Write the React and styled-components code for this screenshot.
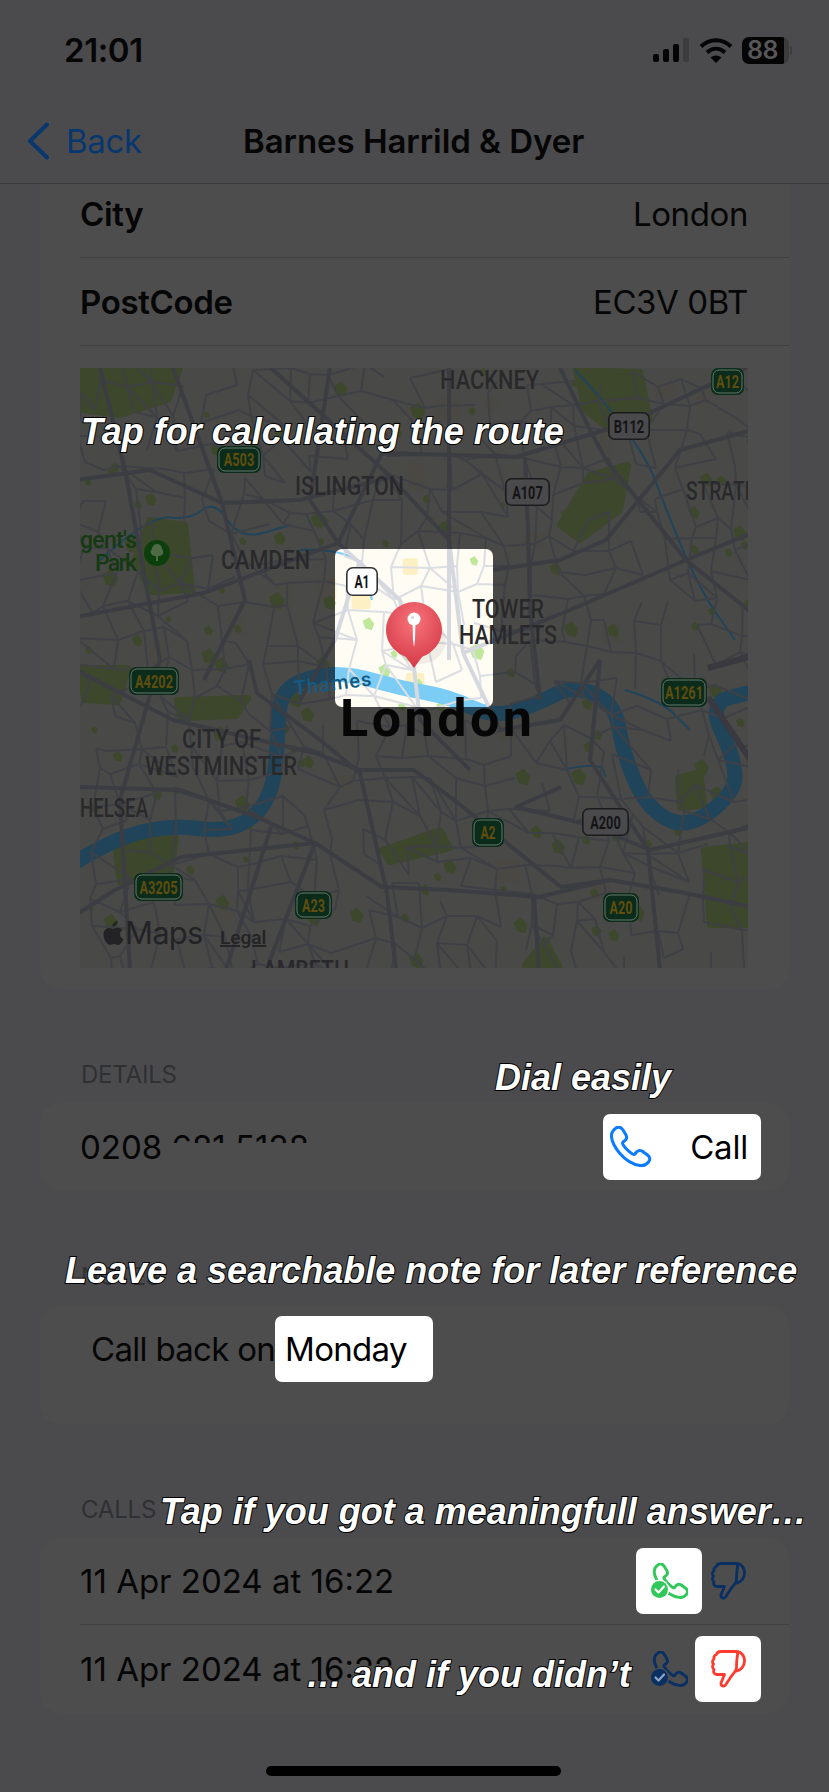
import React, { useMemo } from "react";
import styled, { createGlobalStyle } from "styled-components";

const GlobalStyle = createGlobalStyle`
  html, body {
    margin: 0;
    padding: 0;
    background: #4b4b4d;
  }
`;

const Screen = styled.div`
  position: relative;
  width: 829px;
  height: 1792px;
  overflow: hidden;
  display: flex;
  flex-direction: column;
  background: #4b4b4d;
  color: #060606;
  font-family: Inter, "Liberation Sans", sans-serif;
  font-size: 33px;
`;

const StatusBar = styled.div`
  height: 100px;
  flex: none;
  display: flex;
  justify-content: space-between;
  align-items: center;
  padding: 0 40px 0 64px;
  box-sizing: border-box;
`;

const Clock = styled.span`
  font-size: 33px;
  font-weight: 600;
  letter-spacing: -0.4px;
`;

const StatusIcons = styled.div`
  display: flex;
  align-items: center;
  gap: 9px;
`;

const Battery = styled.div`
  position: relative;
  width: 47px;
  height: 27px;
  border-radius: 7px;
  background: linear-gradient(90deg, #050505 0 89%, #3c3c3d 89% 100%);
  color: #57575a;
  font-size: 25px;
  font-weight: 600;
  display: flex;
  align-items: center;
  padding-left: 5px;
  box-sizing: border-box;
  letter-spacing: -0.5px;

  &::after {
    content: "";
    position: absolute;
    right: -3px;
    top: 9px;
    width: 2px;
    height: 9px;
    border-radius: 0 2px 2px 0;
    background: #3c3c3d;
  }
`;

const NavBar = styled.div`
  height: 84px;
  flex: none;
  display: flex;
  align-items: center;
  box-sizing: border-box;
  border-bottom: 1px solid #3a3a3b;
  padding-left: 26px;
  padding-bottom: 2px;
`;

const BackLink = styled.div`
  display: flex;
  align-items: center;
  gap: 16px;
  width: 217px;
  color: #07376e;
  letter-spacing: -0.3px;
`;

const NavTitle = styled.div`
  font-weight: 600;
  letter-spacing: -0.05px;
`;

const Scroller = styled.div`
  flex: 1;
  overflow: hidden;
  padding: 0 40px;
`;

const Card = styled.div`
  background: #4d4d4d;
  border-radius: 20px;
  padding-left: ${(p) => p.$inset || 40}px;
  padding-bottom: ${(p) => p.$bottom || 0}px;
`;

const FirstCard = styled(Card)`
  margin-top: -14px;
  border-radius: 0 0 20px 20px;
`;

const Row = styled.div`
  height: 88px;
  box-sizing: border-box;
  display: flex;
  align-items: center;
  justify-content: space-between;
  padding-right: ${(p) => p.$right || 41}px;
  border-bottom: ${(p) => (p.$divider ? "1px solid #3f3f40" : "none")};
`;

const FieldName = styled.span`
  font-weight: 600;
  letter-spacing: -0.35px;
`;

const FieldValue = styled.span`
  letter-spacing: -0.4px;
`;

const MapFrame = styled.div`
  width: 668px;
  height: 600px;
  margin-top: 22px;
  overflow: hidden;

  svg {
    display: block;
  }
`;

const SectionLabel = styled.div`
  height: 30px;
  line-height: 30px;
  margin: 71px 0 ${(p) => p.$after || 13}px 41px;
  color: #2f3032;
  font-size: 24px;
  letter-spacing: -0.2px;
`;

const CoveredText = styled.span`
  display: inline-block;
  clip-path: inset(0 0 ${(p) => p.$cut}% 0);
`;

const BodyText = styled.span`
  letter-spacing: ${(p) => p.$track || 0}px;
  white-space: pre;
`;

const SpotButton = styled.div`
  width: 158px;
  height: 66px;
  box-sizing: border-box;
  background: #fff;
  border-radius: 7px;
  display: flex;
  align-items: center;
  justify-content: space-between;
  padding: 0 13px 0 7px;
  color: #000;
  letter-spacing: -0.2px;
`;

const NoteField = styled(SpotButton)`
  justify-content: flex-start;
  padding: 0 0 0 10px;
  letter-spacing: -0.7px;
`;

const NoteRow = styled.div`
  height: 88px;
  display: flex;
  align-items: center;
`;

const Actions = styled.div`
  display: flex;
  align-items: center;
`;

const ActionSlot = styled.div`
  width: 66px;
  height: 66px;
  border-radius: 7px;
  background: ${(p) => (p.$lit ? "#fff" : "transparent")};
  display: flex;
  align-items: center;
  justify-content: center;

  & + & {
    margin-left: -7px;
  }
`;

const Caption = styled.div`
  position: absolute;
  left: ${(p) => p.$left}px;
  top: ${(p) => p.$top}px;
  font-family: "Liberation Sans", Arial, sans-serif;
  font-style: italic;
  font-weight: 700;
  font-size: 36px;
  line-height: 40px;
  white-space: nowrap;
  color: #fff;
  -webkit-text-stroke: 2px #000;
  paint-order: stroke fill;
`;

const HomeBar = styled.div`
  position: absolute;
  left: 266px;
  bottom: 16px;
  width: 295px;
  height: 10px;
  border-radius: 5px;
  background: #000;
`;

const PHONE =
  "M6 2C9 0 11 1 13 4L16 9C17 11 17 13 15 14.5L13 16C12.5 16.5 12.5 17.5 13 18.5C15 22 18 25 22.5 28C23.5 28.5 24.5 28.5 25 28L26.5 26C28 24.5 30 24 32 25L37.5 29C40 31 40.5 33.5 38.5 36C36.5 38.5 33.5 40 30 39.5C22 38.5 15 33.5 9.5 27C5 21.5 2 16 1.5 11C1.2 7.5 3 4 6 2Z";

const CallIcon = () => (
  <svg width="42" height="42" viewBox="0 0 42 42" fill="none">
    <path d={PHONE} stroke="#0a7cff" strokeWidth="3" strokeLinejoin="round" />
  </svg>
);

const LoggedCallIcon = ({ color, ring }) => (
  <svg width="38" height="36" viewBox="0 0 38 36" fill="none">
    <g transform="translate(3 0) scale(0.87)">
      <path d={PHONE} stroke={color} strokeWidth="3.4" strokeLinejoin="round" />
    </g>
    <circle cx="9.5" cy="26.5" r="10" fill={ring} />
    <circle cx="9.5" cy="26.5" r="8.5" fill={color} />
    <path
      d="M5.5 26.5l3 3 5.5-6"
      stroke={ring === "#fff" ? "#fff" : "#8fa6c4"}
      strokeWidth="2.2"
      strokeLinecap="round"
      strokeLinejoin="round"
    />
  </svg>
);

const ThumbDown = ({ color }) => (
  <svg width="35" height="38" viewBox="0 0 35 38" fill="none">
    <path
      d="M10 1.5H24C26 1.5 27 3 26.5 5C25.5 10 25.5 15 25.5 18C25.5 21 20.5 25 18.5 29L14.5 35C13 37 9.5 36 10 33L13.5 24.5H6C3 24.5 2 22 3 19.5C1 18 1.2 15.5 2.5 14C1 12.5 1.2 10 3 9C2.5 6.5 4 5 5.5 4.5C6 2.5 8 1.5 10 1.5Z"
      stroke={color}
      strokeWidth="2.8"
      strokeLinejoin="round"
    />
    <path
      d="M24 1.5C30 1 33.5 5.5 33.5 11C33.5 16 30 20.5 25.5 21"
      stroke={color}
      strokeWidth="2.8"
      strokeLinecap="round"
    />
  </svg>
);

const DIM = {
  land: "#494947",
  road: "#3c3d43",
  roadEdge: "#3f4045",
  park: "#3d472c",
  water: "#20445a",
  tint: "#4a4843",
};

const BRIGHT = {
  land: "#fefcf3",
  road: "#d6d8e0",
  roadEdge: "#dcdee4",
  park: "#bfe89c",
  water: "#7ccdf6",
  tint: "#fdf0c4",
};

const line = (pts) => "M" + pts.map((p) => p.join(" ")).join("L");

// rounds a polyline through the midpoints of its segments
const smooth = (pts) => {
  let d = `M${pts[0][0]} ${pts[0][1]}`;
  for (let i = 1; i < pts.length - 1; i++) {
    const mx = (pts[i][0] + pts[i + 1][0]) / 2;
    const my = (pts[i][1] + pts[i + 1][1]) / 2;
    d += `Q${pts[i][0]} ${pts[i][1]} ${mx} ${my}`;
  }
  const last = pts[pts.length - 1];
  return d + `L${last[0]} ${last[1]}`;
};

const THAMES = [
  [76, 862], [115, 838], [173, 825], [222, 832], [257, 817], [275, 783], [278, 727], [281, 693],
  [307, 677], [347, 673], [400, 688], [450, 697], [494, 718], [539, 703], [574, 685], [615, 703],
  [623, 753], [646, 807], [686, 830], [735, 793], [735, 760], [708, 703], [752, 692],
];

const CANALS = [
  [[100, 560], [150, 515], [190, 520], [215, 500], [240, 540], [290, 525]],
  [[575, 370], [640, 440], [670, 520], [700, 590], [735, 640]],
  [[561, 770], [600, 762], [606, 777]],
  [[625, 690], [660, 700], [690, 730]],
  [[300, 550], [360, 548], [372, 600]],
];

const MAIN_ROADS = [
  [[360, 770], [414, 770], [458, 803], [507, 843], [561, 887], [610, 880], [680, 892], [752, 907]],
  [[76, 915], [115, 890], [181, 857], [315, 843], [382, 887], [449, 890], [539, 897], [610, 880]],
  [[752, 827], [650, 850], [590, 825], [516, 807], [561, 787]],
  [[76, 617], [204, 593], [338, 543], [382, 453], [516, 457], [628, 423], [752, 365]],
  [[449, 360], [449, 540], [449, 660]],
  [[525, 457], [528, 530], [530, 610], [540, 700]],
  [[173, 368], [222, 503], [245, 600], [204, 680]],
  [[271, 368], [391, 477], [449, 540], [463, 653]],
  [[606, 460], [686, 560], [752, 613]],
  [[463, 653], [570, 610], [686, 560], [752, 533]],
  [[76, 670], [173, 720], [315, 753], [360, 770]],
  [[249, 660], [257, 693], [320, 740], [360, 773], [387, 893], [396, 970]],
  [[76, 787], [180, 790], [257, 817], [315, 843]],
  [[271, 827], [226, 970]],
  [[315, 843], [266, 970]],
  [[534, 897], [539, 970]],
  [[338, 543], [400, 600], [414, 668], [420, 720], [470, 770]],
  [[360, 560], [335, 640], [300, 700]],
  [[76, 480], [150, 470], [222, 503], [300, 500], [391, 477]],
  [[493, 570], [560, 560], [606, 540], [680, 450], [752, 430]],
  [[100, 368], [125, 470], [160, 660], [120, 800], [130, 970]],
  [[330, 368], [310, 500], [338, 543]],
  [[560, 368], [590, 430], [606, 460]],
  [[600, 660], [590, 760], [648, 850], [660, 970]],
  [[463, 653], [500, 730], [560, 720], [600, 660]],
];

const PARKS = [
  [[80, 368], [180, 368], [168, 400], [120, 415], [82, 410]],
  [[150, 520], [185, 525], [192, 590], [150, 592], [135, 560]],
  [[576, 370], [640, 372], [650, 420], [610, 430], [585, 410]],
  [[590, 475], [628, 465], [620, 510], [580, 540], [560, 525]],
  [[115, 842], [176, 838], [170, 880], [120, 882]],
  [[81, 668], [128, 668], [118, 702], [84, 700]],
  [[177, 700], [248, 698], [236, 716], [180, 718]],
  [[704, 850], [748, 845], [748, 925], [710, 925]],
  [[525, 965], [545, 940], [560, 968]],
  [[382, 850], [440, 830], [450, 848], [390, 862]],
  [[678, 778], [700, 772], [704, 805], [680, 808]],
];

const mulberry = (seed) => () => {
  seed = (seed + 0x6d2b79f5) | 0;
  let t = Math.imul(seed ^ (seed >>> 15), 1 | seed);
  t = (t + Math.imul(t ^ (t >>> 7), 61 | t)) ^ t;
  return ((t ^ (t >>> 14)) >>> 0) / 4294967296;
};

// street mesh and little green patches, seeded so both map layers agree
const buildStreets = () => {
  const rnd = mulberry(4211);
  const cols = 26;
  const rows = 23;
  const pts = [];
  for (let r = 0; r <= rows; r++) {
    const row = [];
    for (let c = 0; c <= cols; c++) {
      row.push([
        Math.round(70 + c * 26.5 + (rnd() - 0.5) * 20 + r * 1.5),
        Math.round(358 + r * 27.5 + (rnd() - 0.5) * 20 + c),
      ]);
    }
    pts.push(row);
  }
  const streets = [];
  for (let r = 0; r <= rows; r++) {
    for (let c = 0; c <= cols; c++) {
      if (c < cols && rnd() > 0.34) streets.push(line([pts[r][c], pts[r][c + 1]]));
      if (r < rows && rnd() > 0.34) streets.push(line([pts[r][c], pts[r + 1][c]]));
      if (c < cols && r < rows && rnd() > 0.85) streets.push(line([pts[r][c], pts[r + 1][c + 1]]));
    }
  }
  const patches = [];
  for (let i = 0; i < 130; i++) {
    const x = 80 + rnd() * 668;
    const y = 368 + rnd() * 600;
    const s = 3 + rnd() * 6;
    patches.push(`M${x} ${y}l${s} ${-s * 0.6}l${s * 0.8} ${s}l${-s * 0.4} ${s}l${-s} ${-s * 0.3}Z`);
  }
  const tints = [];
  for (let i = 0; i < 22; i++) {
    tints.push([80 + rnd() * 640, 368 + rnd() * 580, 8 + rnd() * 14, 12 + rnd() * 16]);
  }
  return { streets: streets.join(""), patches: patches.join(""), tints };
};

const MapLayer = ({ tone, base }) => (
  <g>
    <rect x="80" y="368" width="668" height="600" fill={tone.land} />
    {base.tints.map((t, i) => (
      <rect key={i} x={t[0]} y={t[1]} width={t[2]} height={t[3]} rx="3" fill={tone.tint} />
    ))}
    {PARKS.map((p, i) => (
      <path key={i} d={line(p) + "Z"} fill={tone.park} stroke={tone.park} strokeWidth="6" strokeLinejoin="round" />
    ))}
    <path d={base.patches} fill={tone.park} />
    <path d={smooth(THAMES)} fill="none" stroke={tone.water} strokeWidth="15" strokeLinejoin="round" />
    {CANALS.map((c, i) => (
      <path key={i} d={smooth(c)} fill="none" stroke={tone.water} strokeWidth="2" />
    ))}
    <path d={base.streets} fill="none" stroke={tone.roadEdge} strokeWidth="2" strokeLinejoin="round" />
    {MAIN_ROADS.map((r, i) => (
      <path key={i} d={line(r)} fill="none" stroke={tone.road} strokeWidth="4" strokeLinejoin="round" />
    ))}
    <path d="M708 668L752 656M708 697L752 762" fill="none" stroke="#39393f" strokeWidth="6" />
  </g>
);

const Shield = ({ x, y, w, h, label, green, lit }) => {
  const fill = green ? "#0b2c1b" : lit ? "#fff" : "#4a4a4c";
  const edge = green ? "#66766b" : lit ? "#333" : "#1c1c1e";
  const ink = green ? "#5f4e0e" : "#141416";
  return (
    <g>
      {green && <rect x={x} y={y} width={w} height={h} rx="7" fill="#0b2c1b" />}
      <rect
        x={x + (green ? 2 : 0.8)}
        y={y + (green ? 2 : 0.8)}
        width={w - (green ? 4 : 1.6)}
        height={h - (green ? 4 : 1.6)}
        rx="6"
        fill={fill}
        stroke={edge}
        strokeWidth={green ? 1 : 1.6}
      />
      <text
        x={x + w / 2}
        y={y + h / 2 + 6.5}
        textAnchor="middle"
        textLength={label.length * 7.6}
        lengthAdjust="spacingAndGlyphs"
        fontFamily="Roboto, sans-serif"
        fontWeight="700"
        fontSize="18"
        fill={ink}
      >
        {label}
      </text>
    </g>
  );
};

const SHIELDS = [
  { x: 711, y: 368, w: 33, h: 27, label: "A12", green: true },
  { x: 217, y: 446, w: 44, h: 27, label: "A503", green: true },
  { x: 129, y: 667, w: 50, h: 28, label: "A4202", green: true },
  { x: 661, y: 678, w: 46, h: 29, label: "A1261", green: true },
  { x: 472, y: 818, w: 32, h: 29, label: "A2", green: true },
  { x: 134, y: 873, w: 49, h: 28, label: "A3205", green: true },
  { x: 295, y: 891, w: 37, h: 28, label: "A23", green: true },
  { x: 603, y: 893, w: 36, h: 29, label: "A20", green: true },
  { x: 608, y: 412, w: 42, h: 28, label: "B112" },
  { x: 505, y: 478, w: 45, h: 28, label: "A107" },
  { x: 582, y: 808, w: 47, h: 28, label: "A200" },
  { x: 346, y: 567, w: 32, h: 29, label: "A1", lit: true },
];

const PLACES = [
  { x: 440, y: 389, w: 99, t: "HACKNEY" },
  { x: 295, y: 495, w: 109, t: "ISLINGTON" },
  { x: 686, y: 500, w: 64, t: "STRATI" },
  { x: 221, y: 569, w: 89, t: "CAMDEN" },
  { x: 472, y: 618, w: 72, t: "TOWER" },
  { x: 459, y: 644, w: 98, t: "HAMLETS" },
  { x: 182, y: 748, w: 79, t: "CITY OF" },
  { x: 145, y: 775, w: 152, t: "WESTMINSTER" },
  { x: 80, y: 817, w: 68, t: "HELSEA" },
  { x: 251, y: 979, w: 98, t: "LAMBETH" },
];

const LondonMap = () => {
  const base = useMemo(buildStreets, []);
  return (
    <svg width="668" height="600" viewBox="80 368 668 600">
      <defs>
        <clipPath id="spot">
          <rect x="335" y="549" width="158" height="158" rx="7" />
        </clipPath>
        <radialGradient id="pinHead" cx="50%" cy="30%" r="75%">
          <stop offset="0%" stopColor="#f8737a" />
          <stop offset="100%" stopColor="#d13644" />
        </radialGradient>
      </defs>
      <MapLayer tone={DIM} base={base} />
      <g clipPath="url(#spot)">
        <MapLayer tone={BRIGHT} base={base} />
      </g>
      {PLACES.map((p) => (
        <text
          key={p.t}
          x={p.x}
          y={p.y}
          textLength={p.w}
          lengthAdjust="spacingAndGlyphs"
          fontFamily="Roboto, sans-serif"
          fontWeight="500"
          fontSize="25"
          fill="#29292c"
        >
          {p.t}
        </text>
      ))}
      <text x="80" y="548" textLength="57" fontFamily="Roboto, sans-serif" fontWeight="500" fontSize="23" fill="#153a12">
        gent's
      </text>
      <text x="95" y="571" textLength="42" fontFamily="Roboto, sans-serif" fontWeight="500" fontSize="23" fill="#153a12">
        Park
      </text>
      <circle cx="157" cy="553" r="13" fill="#0c3f0c" />
      <path d="M157 544a5 5 0 0 1 5 5a4 4 0 0 1-3 7h-1v5h-2v-5h-1a4 4 0 0 1-3-7a5 5 0 0 1 5-5Z" fill="#4e6a47" />
      <text
        x="295"
        y="695"
        transform="rotate(-7 295 695)"
        fontFamily="Roboto, sans-serif"
        fontWeight="500"
        fontSize="20"
        letterSpacing="1"
        fill="#155a82"
      >
        Thames
      </text>
      {SHIELDS.map((s) => (
        <Shield key={s.label} {...s} />
      ))}
      <ellipse cx="420" cy="640" rx="26" ry="24" fill="#000" opacity="0.06" />
      <path
        d="M386 630a28 28 0 0 1 56 0c0 15-12 24-20 27l-8 11-8-11c-8-3-20-12-20-27Z"
        fill="url(#pinHead)"
      />
      <circle cx="414" cy="619" r="6.5" fill="#fff" />
      <circle cx="412.5" cy="617.5" r="1.6" fill="#d8d8d8" />
      <path d="M412.6 624h2.8l-0.4 16-1 7-1-7Z" fill="#fff" />
      <text x="340" y="736" fontFamily="Roboto, sans-serif" fontWeight="700" fontSize="52" textLength="192" fill="#060606">
        London
      </text>
      <path
        d="M113 929c1.5 0 3-1.2 5-1.2 2 0 3.500 1 4.500 2.300-3.700 2.200-3 7.500 1 9-1 2.500-3.200 6-5.500 6-1.500 0-2.300-1-4-1s-2.700 1-4 1c-2.800 0-6.500-5.700-6.500-10.500 0-4.300 2.800-6.600 5.500-6.600 1.600 0 3 1 4 1ZM117.500 921c.2 3-2.500 5.800-5 5.600-.3-2.800 2.500-5.600 5-5.600Z"
        fill="#232325"
      />
      <text x="125" y="944" fontFamily="Inter, sans-serif" fontSize="31" letterSpacing="-0.8" fill="#232325">
        Maps
      </text>
      <text x="220" y="944" fontFamily="Roboto, sans-serif" fontWeight="500" fontSize="19" textDecoration="underline" fill="#232325">
        Legal
      </text>
    </svg>
  );
};

const CAPTIONS = [
  { text: "Tap for calculating the route", left: 81, top: 412 },
  { text: "Dial easily", left: 495, top: 1058 },
  { text: "Leave a searchable note for later reference", left: 65, top: 1251 },
  { text: "Tap if you got a meaningfull answer…", left: 160, top: 1492 },
  { text: "… and if you didn’t", left: 306, top: 1655 },
];

export default function App() {
  return (
    <Screen>
      <GlobalStyle />
      <StatusBar>
        <Clock>21:01</Clock>
        <StatusIcons>
          <svg width="37" height="25" viewBox="0 0 37 25">
            <rect x="0" y="16" width="6" height="8" rx="2" fill="#050505" />
            <rect x="10" y="11" width="6" height="13" rx="2" fill="#050505" />
            <rect x="20" y="6" width="6" height="18" rx="2" fill="#050505" />
            <rect x="30" y="0" width="6" height="24" rx="2" fill="#3c3c3d" />
          </svg>
          <svg width="34" height="26" viewBox="0 0 34 26" fill="none" stroke="#050505" strokeWidth="4">
            <path d="M2 9.500C10.500 1 23.500 1 32 9.500" />
            <path d="M8 15.500C13.500 10.500 20.500 10.500 26 15.500" />
            <path d="M17 26L11.500 20.500C15 17.700 19 17.700 22.500 20.500Z" fill="#050505" stroke="none" />
          </svg>
          <Battery>88</Battery>
        </StatusIcons>
      </StatusBar>
      <NavBar>
        <BackLink>
          <svg width="24" height="38" viewBox="0 0 24 38" fill="none">
            <path d="M21 2.500L4 19L21 35.500" stroke="#07376e" strokeWidth="4" strokeLinecap="round" strokeLinejoin="round" />
          </svg>
          Back
        </BackLink>
        <NavTitle>Barnes Harrild &amp; Dyer</NavTitle>
      </NavBar>
      <Scroller>
        <FirstCard $bottom={21}>
          <Row $divider>
            <FieldName>City</FieldName>
            <FieldValue>London</FieldValue>
          </Row>
          <Row $divider>
            <FieldName>PostCode</FieldName>
            <FieldValue>EC3V 0BT</FieldValue>
          </Row>
          <MapFrame>
            <LondonMap />
          </MapFrame>
        </FirstCard>

        <SectionLabel>DETAILS</SectionLabel>
        <Card>
          <Row $right={28}>
            <BodyText>
              0208 <CoveredText $cut={60}>681 5128</CoveredText>
            </BodyText>
            <SpotButton>
              <CallIcon />
              Call
            </SpotButton>
          </Row>
        </Card>

        <SectionLabel>NOTES</SectionLabel>
        <Card $inset={51} $bottom={31}>
          <NoteRow>
            <BodyText $track={-0.7}>Call back on</BodyText>
            <NoteField>Monday</NoteField>
          </NoteRow>
        </Card>

        <SectionLabel $after={12}>CALLS</SectionLabel>
        <Card>
          <Row $divider $right={28}>
            <BodyText>11 Apr 2024 at 16:22</BodyText>
            <Actions>
              <ActionSlot $lit>
                <LoggedCallIcon color="#30c85a" ring="#fff" />
              </ActionSlot>
              <ActionSlot>
                <ThumbDown color="#0a2f63" />
              </ActionSlot>
            </Actions>
          </Row>
          <Row $right={28}>
            <BodyText>
              11 Apr 2024 at 16:<CoveredText $cut={58}>22</CoveredText>
            </BodyText>
            <Actions>
              <ActionSlot>
                <LoggedCallIcon color="#0a2f63" ring="#4d4d4d" />
              </ActionSlot>
              <ActionSlot $lit>
                <ThumbDown color="#ff3b30" />
              </ActionSlot>
            </Actions>
          </Row>
        </Card>
      </Scroller>

      {CAPTIONS.map((c) => (
        <Caption key={c.text} $left={c.left} $top={c.top}>
          {c.text}
        </Caption>
      ))}
      <HomeBar />
    </Screen>
  );
}
